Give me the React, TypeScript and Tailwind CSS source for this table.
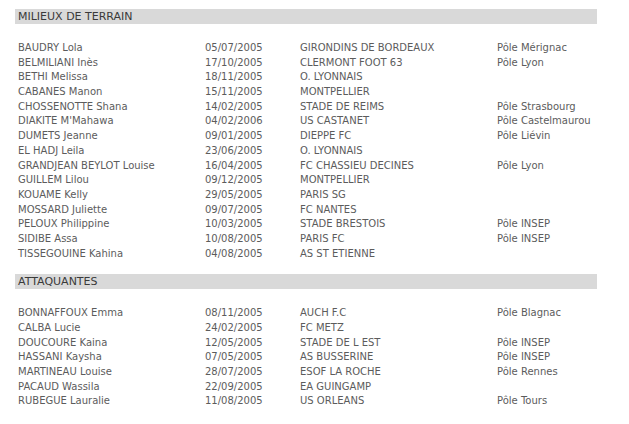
import React from "react";

type Row = [string, string, string, string];

const milieux: Row[] = [
  ["BAUDRY Lola", "05/07/2005", "GIRONDINS DE BORDEAUX", "Pôle Mérignac"],
  ["BELMILIANI Inès", "17/10/2005", "CLERMONT FOOT 63", "Pôle Lyon"],
  ["BETHI Melissa", "18/11/2005", "O. LYONNAIS", ""],
  ["CABANES Manon", "15/11/2005", "MONTPELLIER", ""],
  ["CHOSSENOTTE Shana", "14/02/2005", "STADE DE REIMS", "Pôle Strasbourg"],
  ["DIAKITE M'Mahawa", "04/02/2006", "US CASTANET", "Pôle Castelmaurou"],
  ["DUMETS Jeanne", "09/01/2005", "DIEPPE FC", "Pôle Liévin"],
  ["EL HADJ Leila", "23/06/2005", "O. LYONNAIS", ""],
  ["GRANDJEAN BEYLOT Louise", "16/04/2005", "FC CHASSIEU DECINES", "Pôle Lyon"],
  ["GUILLEM Lilou", "09/12/2005", "MONTPELLIER", ""],
  ["KOUAME Kelly", "29/05/2005", "PARIS SG", ""],
  ["MOSSARD Juliette", "09/07/2005", "FC NANTES", ""],
  ["PELOUX Philippine", "10/03/2005", "STADE BRESTOIS", "Pôle INSEP"],
  ["SIDIBE Assa", "10/08/2005", "PARIS FC", "Pôle INSEP"],
  ["TISSEGOUINE Kahina", "04/08/2005", "AS ST ETIENNE", ""],
];

const attaquantes: Row[] = [
  ["BONNAFFOUX Emma", "08/11/2005", "AUCH F.C", "Pôle Blagnac"],
  ["CALBA Lucie", "24/02/2005", "FC METZ", ""],
  ["DOUCOURE Kaina", "12/05/2005", "STADE DE L EST", "Pôle INSEP"],
  ["HASSANI Kaysha", "07/05/2005", "AS BUSSERINE", "Pôle INSEP"],
  ["MARTINEAU Louise", "28/07/2005", "ESOF LA ROCHE", "Pôle Rennes"],
  ["PACAUD Wassila", "22/09/2005", "EA GUINGAMP", ""],
  ["RUBEGUE Lauralie", "11/08/2005", "US ORLEANS", "Pôle Tours"],
];

function Section({ title, rows }: { title: string; rows: Row[] }) {
  return (
    <div className="w-[582px]">
      <div className="h-[15px] bg-[#d9d9d9] pl-[3px] text-[11px] leading-[16px] text-[#3a3a3a]">
        {title}
      </div>
      <div className="mt-[17px] pl-[3px] text-[10px] leading-[14.7px] text-[#5c5c5c]">
        {rows.map((r, i) => (
          <div key={i} className="flex h-[14.7px] whitespace-nowrap">
            <div className="w-[187px]">{r[0]}</div>
            <div className="w-[95px]">{r[1]}</div>
            <div className="w-[197px]">{r[2]}</div>
            <div>{r[3]}</div>
          </div>
        ))}
      </div>
    </div>
  );
}

export default function App() {
  return (
    <div
      className="w-[629px] h-[424px] bg-white pl-[15px] pt-[9px] flex flex-col gap-[13px]"
      style={{ fontFamily: '"DejaVu Sans", sans-serif' }}
    >
      <Section title="MILIEUX DE TERRAIN" rows={milieux} />
      <Section title="ATTAQUANTES" rows={attaquantes} />
    </div>
  );
}
